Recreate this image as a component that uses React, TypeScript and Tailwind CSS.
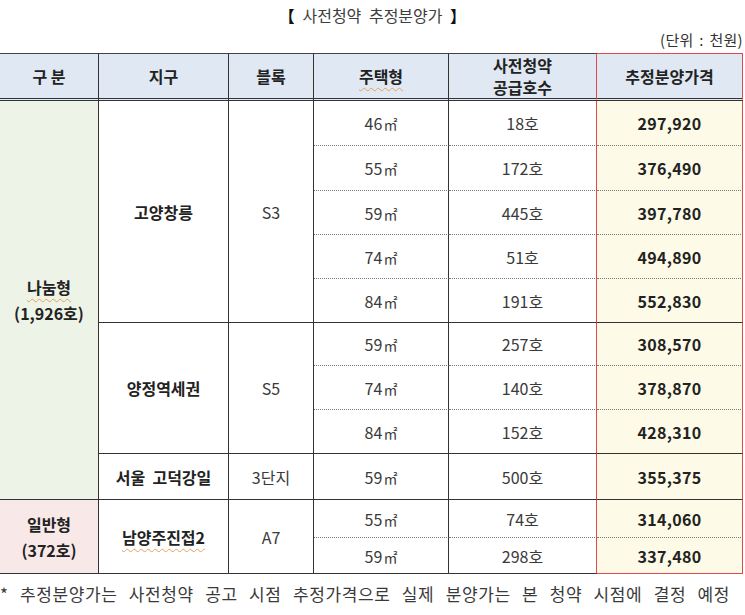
import React from "react";

const F = { fontFamily: '"Noto Sans CJK KR", "Noto Sans", sans-serif' };

type Sub = { m: string; h: string; p: string };
type Grp = { name: string; block: string; wavy?: boolean; subs: Sub[]; heights: number[] };
type Cat = { label: string; sub: string; bg: string; wavy?: boolean; groups: Grp[] };

const cats: Cat[] = [
  {
    label: "나눔형",
    sub: "(1,926호)",
    bg: "bg-[#eef3e7]",
    wavy: true,
    groups: [
      {
        name: "고양창릉",
        block: "S3",
        heights: [45, 45, 44, 44, 44],
        subs: [
          { m: "46", h: "18호", p: "297,920" },
          { m: "55", h: "172호", p: "376,490" },
          { m: "59", h: "445호", p: "397,780" },
          { m: "74", h: "51호", p: "494,890" },
          { m: "84", h: "191호", p: "552,830" },
        ],
      },
      {
        name: "양정역세권",
        block: "S5",
        heights: [43, 44, 44],
        subs: [
          { m: "59", h: "257호", p: "308,570" },
          { m: "74", h: "140호", p: "378,870" },
          { m: "84", h: "152호", p: "428,310" },
        ],
      },
      {
        name: "서울  고덕강일",
        block: "3단지",
        heights: [46],
        subs: [{ m: "59", h: "500호", p: "355,375" }],
      },
    ],
  },
  {
    label: "일반형",
    sub: "(372호)",
    bg: "bg-[#f8e9e8]",
    groups: [
      {
        name: "남양주진접2",
        block: "A7",
        wavy: true,
        heights: [38, 36],
        subs: [
          { m: "55", h: "74호", p: "314,060" },
          { m: "59", h: "298호", p: "337,480" },
        ],
      },
    ],
  },
];

const wavy = "underline decoration-wavy decoration-[#e3a15a] decoration-1 underline-offset-[4px]";

export default function App() {
  const lastCat = cats.length - 1;
  return (
    <div className="w-[745px] h-[615px] overflow-hidden bg-white text-[#3a3a3a]" style={F}>
      <div className="h-[30px] flex items-center justify-center text-[16px] text-[#3d3d3d] whitespace-pre">
        <span className="font-bold text-[#111]">【</span>
        <span className="[word-spacing:4px]"> 사전청약 추정분양가 </span>
        <span className="font-bold text-[#111]">】</span>
      </div>
      <div className="h-[23px] flex justify-end leading-[20px] text-[15px] text-[#333] whitespace-pre pr-[2px]">
        <span className="[word-spacing:2px] tracking-[0.3px]">(단위 : 천원)</span>
      </div>
      <table className="table-fixed border-separate border-spacing-0 w-[743px] text-[16px]">
        <colgroup>
          <col className="w-[99px]" />
          <col className="w-[130px]" />
          <col className="w-[85px]" />
          <col className="w-[135px]" />
          <col className="w-[148px]" />
          <col className="w-[146px]" />
        </colgroup>
        <thead>
          <tr className="h-[47px] bg-[#e0e8f4] text-[#222] font-bold">
            <th className="border-t border-b-[3px] border-r border-t-[#444] border-r-[#333] border-b-[#333] border-double font-bold [border-top-style:solid] [border-right-style:solid]">
              구 분
            </th>
            <th className="border-t border-b-[3px] border-r border-t-[#444] border-r-[#333] border-b-[#333] border-double font-bold [border-top-style:solid] [border-right-style:solid]">
              지구
            </th>
            <th className="border-t border-b-[3px] border-r border-t-[#444] border-r-[#333] border-b-[#333] border-double font-bold [border-top-style:solid] [border-right-style:solid]">
              블록
            </th>
            <th className="border-t border-b-[3px] border-r border-t-[#444] border-r-[#333] border-b-[#333] border-double font-bold [border-top-style:solid] [border-right-style:solid]">
              <span className={wavy}>주택형</span>
            </th>
            <th className="border-t border-b-[3px] border-r border-t-[#444] border-r-[#e04a4a] border-b-[#333] border-double font-bold leading-[22px] [border-top-style:solid] [border-right-style:solid]">
              사전청약
              <br />
              공급호수
            </th>
            <th className="border-t border-b-[3px] border-r border-t-[#e04a4a] border-r-[#e04a4a] border-b-[#333] border-double font-bold [border-top-style:solid] [border-right-style:solid]">
              추정분양가격
            </th>
          </tr>
        </thead>
        <tbody>
          {cats.map((cat, ci) => {
            const catRows = cat.groups.reduce((a, g) => a + g.subs.length, 0);
            let first = true;
            return cat.groups.map((g, gi) =>
              g.subs.map((s, si) => {
                const isLastInGroup = si === g.subs.length - 1;
                const isLastRow = ci === lastCat && gi === cat.groups.length - 1 && isLastInGroup;
                const rowBorder = isLastInGroup
                  ? "border-b border-b-[#333]"
                  : "border-b border-dotted border-b-[#777] [border-right-style:solid]";
                const showCat = first;
                first = false;
                return (
                  <tr key={`${ci}-${gi}-${si}`} style={{ height: g.heights[si] }}>
                    {showCat && (
                      <td
                        rowSpan={catRows}
                        className={`${cat.bg} border-b border-r border-[#333] text-center font-bold text-[#222] leading-[26px]`}
                      >
                        <div>
                          <span className={cat.wavy ? wavy : ""}>{cat.label}</span>
                        </div>
                        <div>{cat.sub}</div>
                      </td>
                    )}
                    {si === 0 && (
                      <>
                        <td
                          rowSpan={g.subs.length}
                          className="border-b border-r border-[#333] text-center font-bold text-[#222] whitespace-pre"
                        >
                          <span className={g.wavy ? wavy : ""}>{g.name}</span>
                        </td>
                        <td
                          rowSpan={g.subs.length}
                          className="border-b border-r border-[#333] text-center text-[#3a3a3a]"
                        >
                          {g.block}
                        </td>
                      </>
                    )}
                    <td className={`${rowBorder} border-r border-r-[#333] text-center text-[#3a3a3a]`}>
                      {s.m}
                      <span className="text-[14px] ml-[1px]">㎡</span>
                    </td>
                    <td className={`${rowBorder} border-r border-r-[#e04a4a] text-center text-[#3a3a3a]`}>
                      {s.h}
                    </td>
                    <td
                      className={`${isLastRow ? "border-b border-b-[#e04a4a]" : rowBorder} border-r border-r-[#e04a4a] bg-[#fdfbe7] text-center font-bold text-[#222] tracking-[0.3px]`}
                    >
                      {s.p}
                    </td>
                  </tr>
                );
              })
            );
          })}
        </tbody>
      </table>
      <div className="h-[40px] flex items-center text-[17px] text-[#3a3a3a] whitespace-nowrap [word-spacing:7px] tracking-[0.6px]">
        * 추정분양가는 사전청약 공고 시점 추정가격으로 실제 분양가는 본 청약 시점에 결정 예정
      </div>
    </div>
  );
}
